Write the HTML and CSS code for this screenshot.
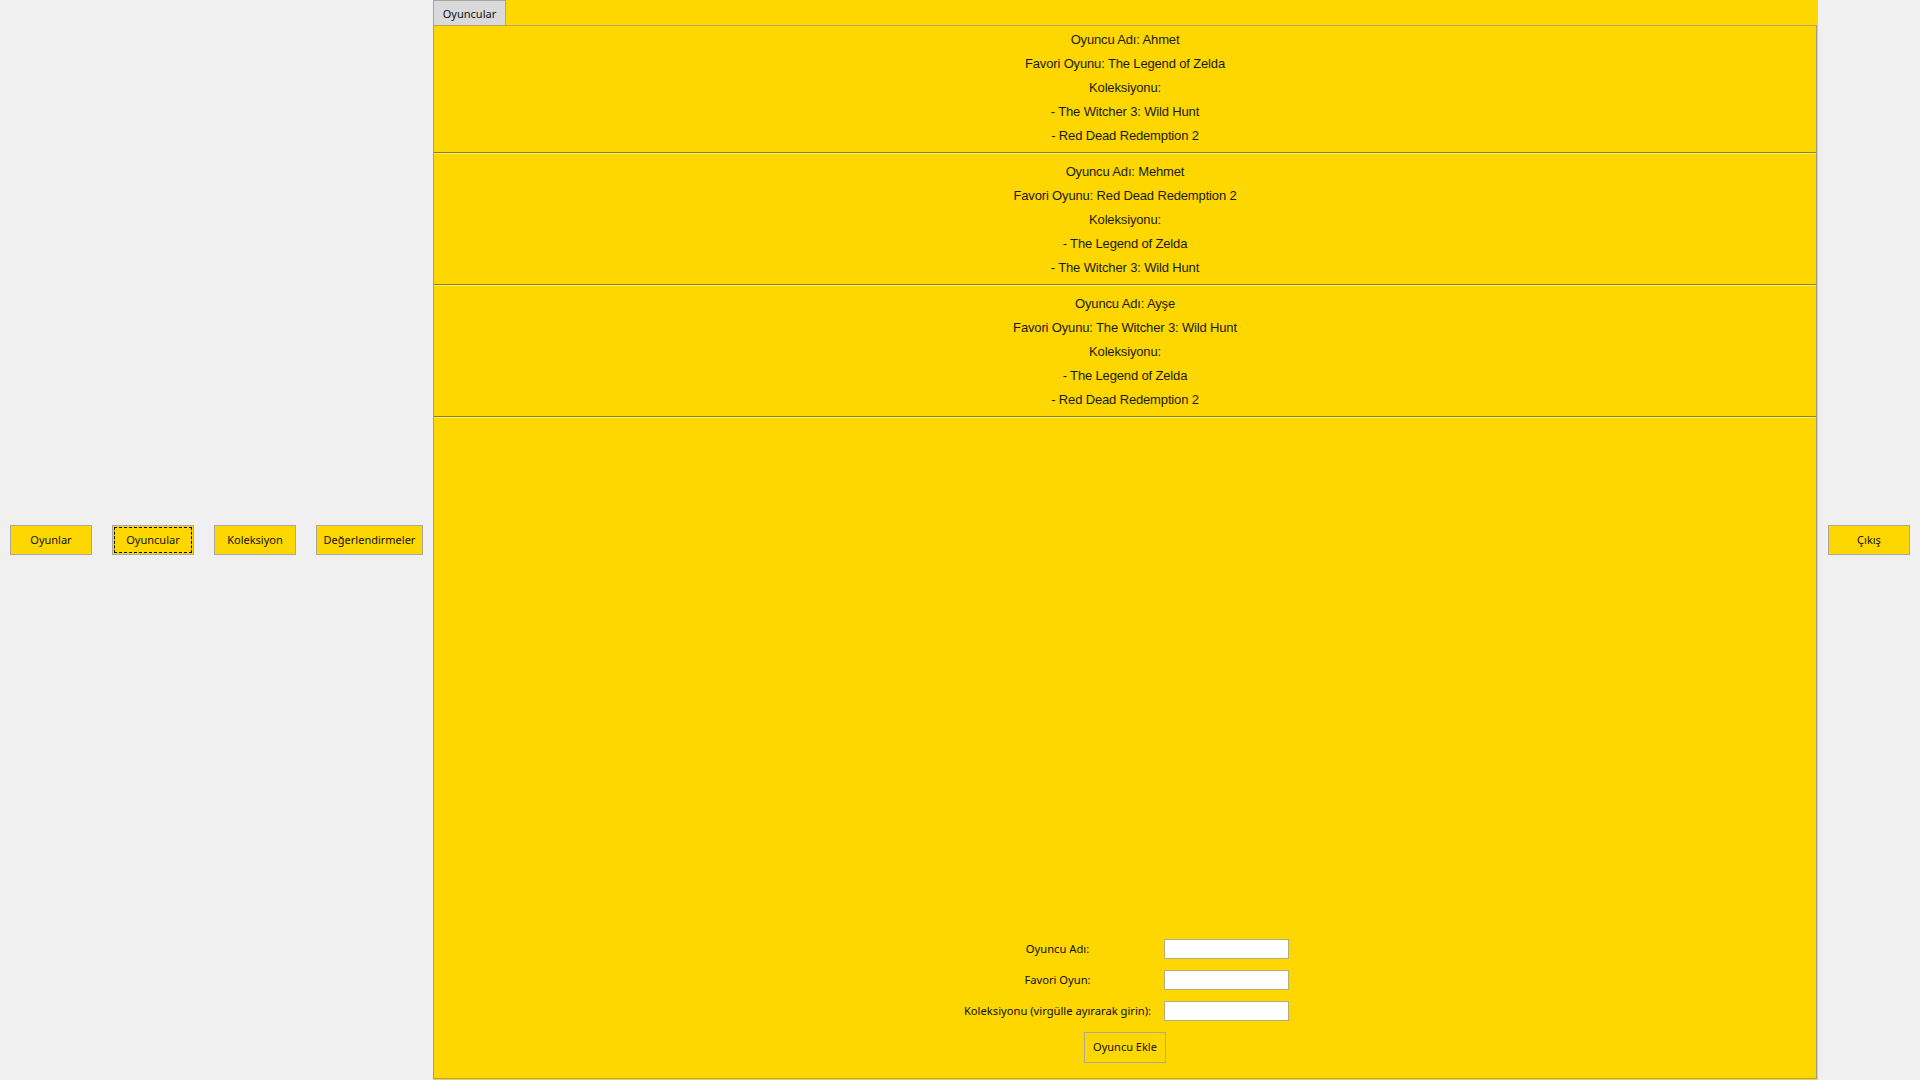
FILE: index.html
```html
<!DOCTYPE html>
<html lang="tr">
<head>
<meta charset="utf-8">
<title>Oyuncular</title>
<link rel="stylesheet" href="styles.css">
</head>
<body>
<div class="app">
  <div class="side side-left">
    <button class="btn">Oyunlar</button>
    <button class="btn btn-focus">Oyuncular</button>
    <button class="btn">Koleksiyon</button>
    <button class="btn btn-wide">Değerlendirmeler</button>
  </div>
  <div class="main">
    <div class="tabstrip">
      <div class="tab">Oyuncular</div>
    </div>
    <div class="content">
      <div class="player player-first">
        <div>Oyuncu Adı: Ahmet</div>
        <div>Favori Oyunu: The Legend of Zelda</div>
        <div>Koleksiyonu:</div>
        <div>- The Witcher 3: Wild Hunt</div>
        <div>- Red Dead Redemption 2</div>
      </div>
      <div class="player">
        <div>Oyuncu Adı: Mehmet</div>
        <div>Favori Oyunu: Red Dead Redemption 2</div>
        <div>Koleksiyonu:</div>
        <div>- The Legend of Zelda</div>
        <div>- The Witcher 3: Wild Hunt</div>
      </div>
      <div class="player">
        <div>Oyuncu Adı: Ayşe</div>
        <div>Favori Oyunu: The Witcher 3: Wild Hunt</div>
        <div>Koleksiyonu:</div>
        <div>- The Legend of Zelda</div>
        <div>- Red Dead Redemption 2</div>
      </div>
      <div class="spacer"></div>
      <div class="form">
        <div class="form-grid">
          <label class="form-label">Oyuncu Adı:</label>
          <input class="field" type="text">
          <label class="form-label">Favori Oyun:</label>
          <input class="field" type="text">
          <label class="form-label">Koleksiyonu (virgülle ayırarak girin):</label>
          <input class="field" type="text">
        </div>
        <button class="btn btn-add">Oyuncu Ekle</button>
      </div>
    </div>
  </div>
  <div class="side side-right">
    <button class="btn">Çıkış</button>
  </div>
</div>
</body>
</html>
```

FILE: styles.css
```css
* { box-sizing: border-box; }
html, body {
  margin: 0;
  padding: 0;
  width: 1920px;
  height: 1080px;
  overflow: hidden;
  background: #f0f0f0;
  font-family: "Liberation Sans", Arial, sans-serif;
}
.app {
  display: flex;
  width: 1920px;
  height: 1080px;
}
.side {
  display: flex;
  align-items: center;
  justify-content: center;
  gap: 20px;
}
.side-left { width: 433px; }
.side-right { width: 102px; }

.btn {
  height: 30px;
  width: 82px;
  padding: 0 0 2px 0;
  background: #ffd700;
  border: 1px solid #ada99a;
  font-family: "Noto Sans", "Open Sans", sans-serif;
  font-size: 11px;
  color: #111;
  cursor: default;
}
.btn-wide { width: 107px; }
.btn-focus {
  outline: 1px dashed #000;
  outline-offset: -3px;
}

.main {
  width: 1385px;
  height: 1080px;
  display: flex;
  flex-direction: column;
  background: #ffd700;
}
.tabstrip {
  height: 25px;
  display: flex;
  align-items: flex-end;
}
.tab {
  height: 25px;
  width: 73px;
  background: #dadada;
  border: 1px solid #a6a6a0;
  border-bottom: none;
  font-family: "Noto Sans", "Open Sans", sans-serif;
  font-size: 11px;
  color: #111;
  display: flex;
  align-items: center;
  justify-content: center;
  padding-top: 1px;
}
.content {
  flex: 1;
  display: flex;
  flex-direction: column;
  border: 1px solid #a39f86;
  border-top-color: #b4a560;
  margin-bottom: 1px;
  margin-right: 1px;
}
.player {
  height: 132px;
  padding-top: 6px;
  border-bottom: 1px solid #8f801e;
  box-shadow: 0 1px 0 #fff07a;
  font-size: 13px;
  letter-spacing: -0.15px;
  line-height: 24px;
  color: #1c1a0c;
  text-align: center;
}
.player-first {
  height: 127px;
  padding-top: 2px;
}
.player + .player {
  border-top: 1px solid #fff07a;
  height: 132px;
  padding-top: 6px;
}
.spacer { flex: 1; }

.form {
  display: flex;
  flex-direction: column;
  align-items: center;
  padding-bottom: 15px;
}
.form-grid {
  display: grid;
  grid-template-columns: 200px 125px;
  grid-auto-rows: 20px;
  column-gap: 6px;
  row-gap: 11px;
  margin-right: 4px;
}
.form-label {
  font-family: "Noto Sans", "Open Sans", sans-serif;
  font-size: 11.2px;
  color: #0d0d0d;
  text-align: center;
  line-height: 20px;
}
.field {
  width: 125px;
  height: 20px;
  border: 1px solid #b5ad7a;
  background: #fff;
  padding: 0 3px;
}
.btn-add {
  margin-top: 11px;
  width: 82px;
  height: 31px;
}
```
